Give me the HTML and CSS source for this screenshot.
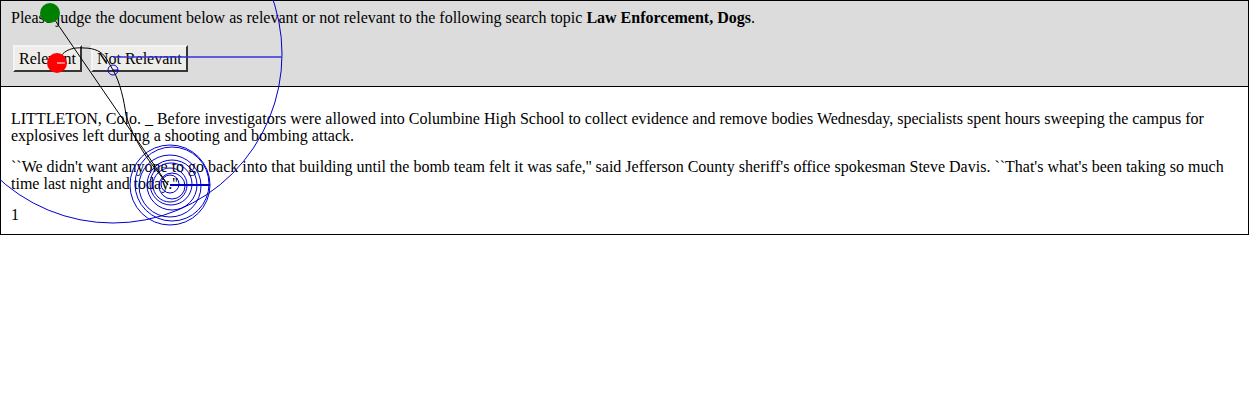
FILE: index.html
```html
<!DOCTYPE html>
<html>
<head>
<meta charset="utf-8">
<link rel="stylesheet" href="styles.css">
</head>
<body>
<div class="frame">
  <div class="topic">
    <p class="prompt">Please judge the document below as relevant or not relevant to the following search topic <b>Law Enforcement, Dogs</b>.</p>
    <div class="buttons">
      <button class="btn">Relevant</button>
      <button class="btn">Not Relevant</button>
    </div>
  </div>
  <div class="doc">
    <p>LITTLETON, Colo. _ Before investigators were allowed into Columbine High School to collect evidence and remove bodies Wednesday, specialists spent hours sweeping the campus for explosives left during a shooting and bombing attack.</p>
    <p>``We didn't want anyone to go back into that building until the bomb team felt it was safe,'' said Jefferson County sheriff's office spokesman Steve Davis. ``That's what's been taking so much time last night and today.''</p>
    <p>1</p>
  </div>
</div>
<svg class="overlay" width="1249" height="400" viewBox="0 0 1249 400">
  <g fill="none" stroke="#0000cc" stroke-width="1">
    <circle cx="113" cy="54" r="169"/>
    <line x1="113" y1="57" x2="282" y2="57" stroke-width="1.5" stroke="#3333dd"/>
    <circle cx="113" cy="70" r="5"/>
    <line x1="113" y1="70" x2="118" y2="70"/>
    <circle cx="170" cy="185" r="40"/>
    <circle cx="172" cy="184" r="37"/>
    <circle cx="170" cy="186" r="31"/>
    <circle cx="172" cy="185" r="25"/>
    <circle cx="171" cy="184" r="21"/>
    <circle cx="170" cy="185" r="17"/>
    <circle cx="172" cy="186" r="13"/>
    <circle cx="170" cy="184" r="9"/>
    <line x1="170" y1="185" x2="210" y2="185" stroke-width="2"/>
  </g>
  <g fill="none" stroke="#000" stroke-width="1">
    <line x1="50" y1="13" x2="168" y2="185"/>
    <path d="M57 63 C62 50 72 47 84 48 C95 48 102 52 106 58 L113 70 C120 82 124 100 126 115 C130 130 140 148 150 162 L168 185"/>
  </g>
  <circle cx="50" cy="13" r="10" fill="#008000"/>
  <circle cx="57" cy="63" r="10" fill="#ff0000"/>
  <line x1="57" y1="63" x2="65" y2="63" stroke="#fff" stroke-width="1"/>
</svg>
</body>
</html>
```

FILE: styles.css
```css
html, body {
  margin: 0;
  padding: 0;
  background: #fff;
}
body {
  font-family: "Liberation Serif", "Times New Roman", serif;
  font-size: 16px;
  color: #000;
  position: relative;
  width: 1249px;
  height: 400px;
}
.frame {
  border: 1px solid #000;
  width: 1247px;
}
.topic {
  background: #dcdcdc;
  border-bottom: 1px solid #000;
  padding: 8px 10px 14px 10px;
}
.prompt {
  margin: 0;
  line-height: 18px;
}
.buttons {
  display: flex;
  align-items: flex-start;
  gap: 9px;
  margin-top: 18px;
  padding-left: 2px;
  height: 27px;
}
.btn {
  font-family: "Liberation Serif", "Times New Roman", serif;
  font-size: 16px;
  color: #000;
  background: #efede9;
  border: 2px outset #f4f4f4;
  border-right-color: #8a8a8a;
  border-bottom-color: #8a8a8a;
  height: 27px;
  padding: 0 4px;
  margin: 0;
  line-height: 20px;
}
.doc {
  padding: 23px 10px 11px 10px;
}
.doc p {
  margin: 0 0 14px 0;
  line-height: 17px;
}
.doc p:last-child {
  margin-bottom: 0;
}
.overlay {
  position: absolute;
  left: 0;
  top: 0;
  pointer-events: none;
}
```
